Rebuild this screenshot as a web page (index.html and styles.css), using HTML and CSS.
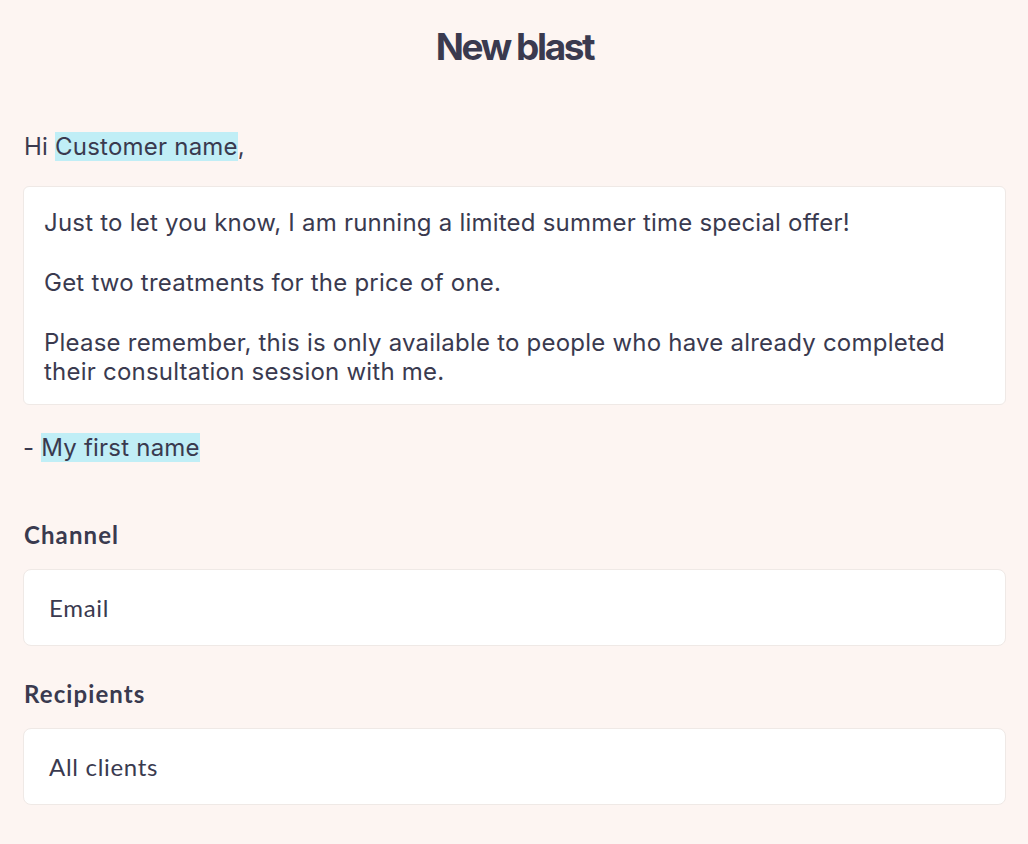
FILE: index.html
```html
<!DOCTYPE html>
<html lang="en">
<head>
<meta charset="utf-8">
<title>New blast</title>
<link rel="stylesheet" href="styles.css">
</head>
<body>
<main class="page">
  <h1 class="title">New blast</h1>
  <p class="greeting">Hi <span class="tag">Customer name</span>,</p>
  <div class="message">
    <p>Just to let you know, I am running a limited summer time special offer!</p>
    <p>Get two treatments for the price of one.</p>
    <p>Please remember, this is only available to people who have already completed their consultation session with me.</p>
  </div>
  <p class="signoff">- <span class="tag">My first name</span></p>
  <section class="field">
    <h2 class="label">Channel</h2>
    <div class="box">Email</div>
  </section>
  <section class="field">
    <h2 class="label">Recipients</h2>
    <div class="box">All clients</div>
  </section>
</main>
</body>
</html>
```

FILE: styles.css
```css
html, body {
  margin: 0;
  padding: 0;
  background: #fdf5f2;
}
body {
  font-family: Inter, "Noto Sans", sans-serif;
  color: #3a3a4f;
  font-size: 24px;
  letter-spacing: 0.22px;
}
.page {
  padding: 24px 22px 0 23px;
}
.title {
  margin: 0;
  text-align: center;
  font-size: 37px;
  font-weight: 700;
  letter-spacing: -2.4px;
  line-height: 46px;
}
.greeting {
  margin: 62px 0 0 1px;
  line-height: 30px;
}
.tag {
  background: #c0eef6;
}
.message {
  margin-top: 24px;
  background: #ffffff;
  border: 1px solid #efe9e6;
  border-radius: 6px;
  padding: 21px 20px 18px 20px;
  line-height: 29px;
}
.message p {
  margin: 0 0 31px 0;
}
.message p:last-child {
  margin-bottom: 0;
}
.signoff {
  margin: 28px 0 0 0;
  line-height: 30px;
}
.field {
  margin-top: 57px;
}
.field + .field {
  margin-top: 33px;
}
.label {
  margin: 0 0 0 1px;
  font-family: Lato, "Open Sans", sans-serif;
  font-weight: 700;
  font-size: 24px;
  letter-spacing: 1.1px;
  line-height: 30px;
}
.box {
  margin-top: 19px;
  background: #ffffff;
  border: 1px solid #efe9e6;
  border-radius: 8px;
  height: 77px;
  box-sizing: border-box;
  padding: 0 25px;
  display: flex;
  align-items: center;
  font-family: Lato, "Open Sans", sans-serif;
  font-size: 24px;
  letter-spacing: 0.7px;
}
```
